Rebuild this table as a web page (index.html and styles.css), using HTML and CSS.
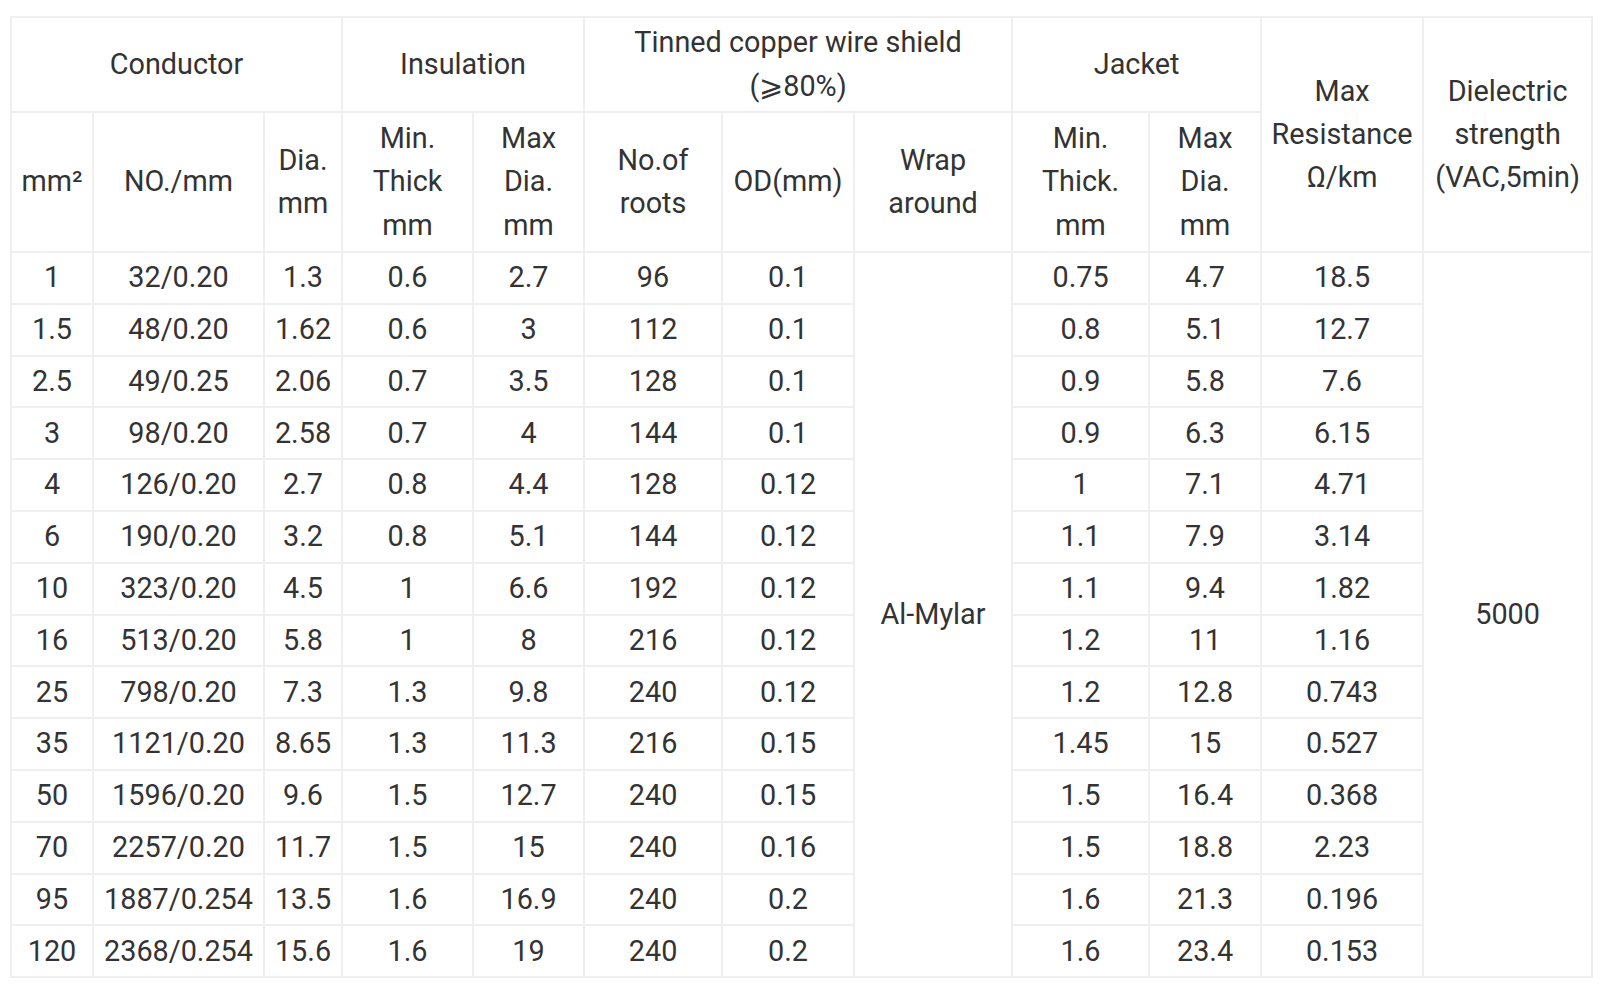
FILE: index.html
```html
<!DOCTYPE html>
<html lang="en">
<head>
<meta charset="utf-8">
<title>Cable specification</title>
<link rel="stylesheet" href="styles.css">
</head>
<body>
<div class="wrap">
<table class="spec">
<colgroup>
<col class="c1"><col class="c2"><col class="c3"><col class="c4"><col class="c5"><col class="c6"><col class="c7"><col class="c8"><col class="c9"><col class="c10"><col class="c11"><col class="c12">
</colgroup>
<thead>
<tr class="h1">
<td colspan="3">Conductor</td>
<td colspan="2">Insulation</td>
<td colspan="3">Tinned copper wire shield<br>(⩾80%)</td>
<td colspan="2">Jacket</td>
<td rowspan="2">Max<br>Resistance<br>Ω/km</td>
<td rowspan="2">Dielectric<br>strength<br>(VAC,5min)</td>
</tr>
<tr class="h2">
<td>mm²</td>
<td>NO./mm</td>
<td>Dia.<br>mm</td>
<td>Min.<br>Thick<br>mm</td>
<td>Max<br>Dia.<br>mm</td>
<td>No.of<br>roots</td>
<td>OD(mm)</td>
<td>Wrap<br>around</td>
<td>Min.<br>Thick.<br>mm</td>
<td>Max<br>Dia.<br>mm</td>
</tr>
</thead>
<tbody>
<tr><td>1</td><td>32/0.20</td><td>1.3</td><td>0.6</td><td>2.7</td><td>96</td><td>0.1</td><td rowspan="14">Al-Mylar</td><td>0.75</td><td>4.7</td><td>18.5</td><td rowspan="14">5000</td></tr>
<tr><td>1.5</td><td>48/0.20</td><td>1.62</td><td>0.6</td><td>3</td><td>112</td><td>0.1</td><td>0.8</td><td>5.1</td><td>12.7</td></tr>
<tr><td>2.5</td><td>49/0.25</td><td>2.06</td><td>0.7</td><td>3.5</td><td>128</td><td>0.1</td><td>0.9</td><td>5.8</td><td>7.6</td></tr>
<tr><td>3</td><td>98/0.20</td><td>2.58</td><td>0.7</td><td>4</td><td>144</td><td>0.1</td><td>0.9</td><td>6.3</td><td>6.15</td></tr>
<tr><td>4</td><td>126/0.20</td><td>2.7</td><td>0.8</td><td>4.4</td><td>128</td><td>0.12</td><td>1</td><td>7.1</td><td>4.71</td></tr>
<tr><td>6</td><td>190/0.20</td><td>3.2</td><td>0.8</td><td>5.1</td><td>144</td><td>0.12</td><td>1.1</td><td>7.9</td><td>3.14</td></tr>
<tr><td>10</td><td>323/0.20</td><td>4.5</td><td>1</td><td>6.6</td><td>192</td><td>0.12</td><td>1.1</td><td>9.4</td><td>1.82</td></tr>
<tr><td>16</td><td>513/0.20</td><td>5.8</td><td>1</td><td>8</td><td>216</td><td>0.12</td><td>1.2</td><td>11</td><td>1.16</td></tr>
<tr><td>25</td><td>798/0.20</td><td>7.3</td><td>1.3</td><td>9.8</td><td>240</td><td>0.12</td><td>1.2</td><td>12.8</td><td>0.743</td></tr>
<tr><td>35</td><td>1121/0.20</td><td>8.65</td><td>1.3</td><td>11.3</td><td>216</td><td>0.15</td><td>1.45</td><td>15</td><td>0.527</td></tr>
<tr><td>50</td><td>1596/0.20</td><td>9.6</td><td>1.5</td><td>12.7</td><td>240</td><td>0.15</td><td>1.5</td><td>16.4</td><td>0.368</td></tr>
<tr><td>70</td><td>2257/0.20</td><td>11.7</td><td>1.5</td><td>15</td><td>240</td><td>0.16</td><td>1.5</td><td>18.8</td><td>2.23</td></tr>
<tr><td>95</td><td>1887/0.254</td><td>13.5</td><td>1.6</td><td>16.9</td><td>240</td><td>0.2</td><td>1.6</td><td>21.3</td><td>0.196</td></tr>
<tr><td>120</td><td>2368/0.254</td><td>15.6</td><td>1.6</td><td>19</td><td>240</td><td>0.2</td><td>1.6</td><td>23.4</td><td>0.153</td></tr>
</tbody>
</table>
</div>
</body>
</html>
```
FILE: styles.css
```css
html, body {
  margin: 0;
  padding: 0;
  background: #ffffff;
}

.wrap {
  padding: 16px 0 0 10px;
}

.spec {
  border-collapse: collapse;
  table-layout: fixed;
  width: 1581px;
  font-family: Roboto, "Noto Sans", sans-serif;
  font-size: 28.8px;
  line-height: 43.3px;
  color: #333333;
}

.spec td {
  border: 2px solid #efefef;
  text-align: center;
  vertical-align: middle;
  padding: 0;
  white-space: nowrap;
}

.c1 { width: 82px; }
.c2 { width: 171px; }
.c3 { width: 78px; }
.c4 { width: 131px; }
.c5 { width: 111px; }
.c6 { width: 138px; }
.c7 { width: 132px; }
.c8 { width: 158px; }
.c9 { width: 137px; }
.c10 { width: 112px; }
.c11 { width: 162px; }
.c12 { width: 169px; }

.h1 { height: 95px; }
.h2 { height: 140px; }
.spec tbody tr { height: 51.8px; }
```
